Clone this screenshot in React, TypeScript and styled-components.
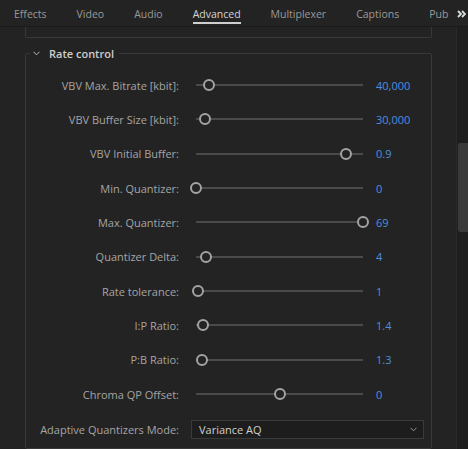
import styled, { createGlobalStyle } from 'styled-components';

const GlobalStyle = createGlobalStyle`
  html, body {
    margin: 0;
    padding: 0;
    background: #232323;
    overflow: hidden;
  }
  body {
    font-family: "Open Sans", "Noto Sans", sans-serif;
  }
`;

const Page = styled.div`
  width: 468px;
  height: 449px;
  display: flex;
  flex-direction: column;
  background: #232323;
  overflow: hidden;
`;

const TabBar = styled.nav`
  height: 26px;
  flex-shrink: 0;
  display: flex;
  align-items: stretch;
  border-bottom: 1px solid #1a1a1a;
  position: relative;
  white-space: nowrap;
`;

const Tab = styled.div<{ $active?: boolean }>`
  padding: 2px 15px 0;
  display: flex;
  align-items: center;
  font-size: 10.5px;
  color: ${(p) => (p.$active ? '#d4d4d4' : '#9a9a9a')};
  position: relative;

  &:first-child {
    padding-left: 14px;
  }

  &::after {
    content: '';
    display: ${(p) => (p.$active ? 'block' : 'none')};
    position: absolute;
    left: 15px;
    right: 15px;
    bottom: 2px;
    height: 2px;
    background: #cfcfcf;
  }
`;

const More = styled.div`
  position: absolute;
  right: 2px;
  top: 1px;
  height: 26px;
  display: flex;
  align-items: center;
`;

const Body = styled.div`
  flex: 1;
  display: flex;
  min-height: 0;
`;

const Content = styled.div`
  flex: 1;
  padding: 0 24px 0 25px;
  display: flex;
  flex-direction: column;
  gap: 16px;
`;

const PrevSection = styled.div`
  height: 10px;
  flex-shrink: 0;
  border: 1px solid #383838;
  border-top: none;
  border-radius: 0 0 2px 2px;
`;

const Fieldset = styled.fieldset`
  margin: -8px 0 0;
  padding: 7px 0 0;
  border: 1px solid #383838;
  border-radius: 2px;
  min-width: 0;
  flex: 1;
`;

const Legend = styled.legend`
  margin-left: 4px;
  padding: 0 5px 0 3px;
  display: flex;
  align-items: center;
  gap: 9px;
  font-size: 11px;
  font-weight: 600;
  color: #cdcdcd;
`;

const Rows = styled.div`
  display: flex;
  flex-direction: column;
`;

const Row = styled.div`
  height: 34.33px;
  display: grid;
  grid-template-columns: 153px 167px auto;
  column-gap: 17px;
  align-items: center;
`;

const Label = styled.div`
  text-align: right;
  font-size: 11px;
  color: #a5a5a5;
  white-space: nowrap;
`;

const Slider = styled.div`
  position: relative;
  height: 14px;
`;

const Track = styled.div`
  position: absolute;
  left: 0;
  right: 0;
  top: 6px;
  height: 2px;
  background: #4a4a4a;
`;

const Thumb = styled.div`
  position: absolute;
  top: 1px;
  width: 12px;
  height: 12px;
  box-sizing: border-box;
  border: 2px solid #a3a3a3;
  border-radius: 50%;
  background: #232323;
`;

const Value = styled.div`
  margin-left: -4px;
  font-size: 11px;
  color: #4a90e0;
`;

const SelectRow = styled.div`
  height: 36px;
  display: grid;
  grid-template-columns: 153px 233px;
  column-gap: 12px;
  align-items: center;
`;

const Select = styled.div`
  height: 19px;
  box-sizing: border-box;
  border: 1px solid #3a3a3a;
  background: #1d1d1d;
  display: flex;
  align-items: center;
  justify-content: space-between;
  padding: 0 6px 0 7px;
  font-size: 11px;
  color: #d0d0d0;
`;

const ScrollTrack = styled.div`
  width: 11px;
  background: #1e1e1e;
  border-left: 1px solid #2a2a2a;
  display: flex;
  flex-direction: column;
  padding-top: 116px;
`;

const ScrollThumb = styled.div`
  margin-left: 1px;
  height: 89px;
  background: #3a3a3a;
  border-radius: 2px 0 0 2px;
`;

const Chevron = ({ color = '#bdbdbd' }: { color?: string }) => (
  <svg width="7" height="5" viewBox="0 0 7 5">
    <path d="M0.5 0.8 L3.5 3.8 L6.5 0.8" fill="none" stroke={color} strokeWidth="1" />
  </svg>
);

const DoubleChevron = () => (
  <svg width="9" height="8" viewBox="0 0 9 8">
    <path d="M1 1 L4 4 L1 7 M5 1 L8 4 L5 7" fill="none" stroke="#dcdcdc" strokeWidth="1.8" />
  </svg>
);

const tabs = ['Effects', 'Video', 'Audio', 'Advanced', 'Multiplexer', 'Captions', 'Pub'];

const sliders = [
  { label: 'VBV Max. Bitrate [kbit]:', value: '40,000', pos: 7.8 },
  { label: 'VBV Buffer Size [kbit]:', value: '30,000', pos: 5.4 },
  { label: 'VBV Initial Buffer:', value: '0.9', pos: 89.8 },
  { label: 'Min. Quantizer:', value: '0', pos: 0 },
  { label: 'Max. Quantizer:', value: '69', pos: 100 },
  { label: 'Quantizer Delta:', value: '4', pos: 6 },
  { label: 'Rate tolerance:', value: '1', pos: 1.2 },
  { label: 'I:P Ratio:', value: '1.4', pos: 4.2 },
  { label: 'P:B Ratio:', value: '1.3', pos: 3.6 },
  { label: 'Chroma QP Offset:', value: '0', pos: 50.3 },
];

function App() {
  return (
    <Page>
      <GlobalStyle />
      <TabBar>
        {tabs.map((t) => (
          <Tab key={t} $active={t === 'Advanced'}>{t}</Tab>
        ))}
        <More>
          <DoubleChevron />
        </More>
      </TabBar>
      <Body>
        <Content>
          <PrevSection />
          <Fieldset>
            <Legend>
              <Chevron />
              Rate control
            </Legend>
            <Rows>
              {sliders.map((s) => (
                <Row key={s.label}>
                  <Label>{s.label}</Label>
                  <Slider>
                    <Track />
                    <Thumb style={{ left: `calc(${s.pos}% - 6px)` }} />
                  </Slider>
                  <Value>{s.value}</Value>
                </Row>
              ))}
              <SelectRow>
                <Label>Adaptive Quantizers Mode:</Label>
                <Select>
                  Variance AQ
                  <Chevron color="#9a9a9a" />
                </Select>
              </SelectRow>
            </Rows>
          </Fieldset>
        </Content>
        <ScrollTrack>
          <ScrollThumb />
        </ScrollTrack>
      </Body>
    </Page>
  );
}

export default App;
